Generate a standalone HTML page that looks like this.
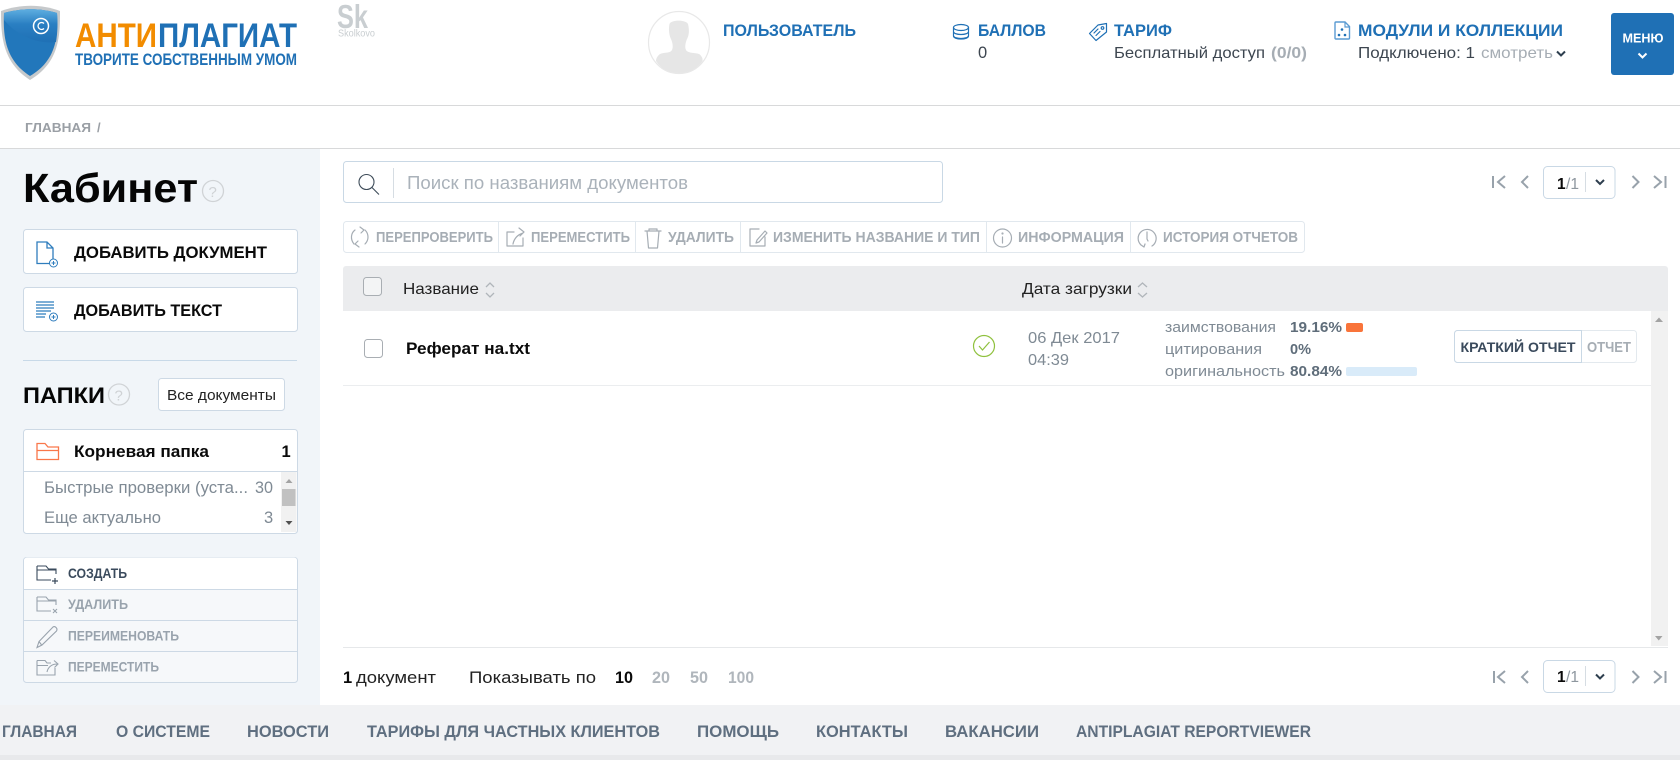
<!DOCTYPE html>
<html lang="ru"><head><meta charset="utf-8"><title>Антиплагиат</title>
<style>
html,body{margin:0;padding:0;background:#fff;width:1680px;height:760px;overflow:hidden}
svg{display:block}
text{font-family:"Liberation Sans",sans-serif;font-size:16px;fill:#333d47}
.b{font-weight:700}
.hd{font-weight:700;font-size:16.5px;fill:#1f70b5}
.bd{font-size:16px;fill:#3d4650}
.tb{font-weight:700;font-size:14.5px;fill:#a6adb4}
.nav{font-weight:700;font-size:16.5px;fill:#5f6f80}
.ac{font-weight:700;font-size:13.5px;fill:#99a3ad}
.gr{font-size:16px;fill:#7f8a94}
.ln{fill:none;stroke-width:1.2;stroke-linecap:round;stroke-linejoin:round}
</style></head><body>
<svg width="1680" height="760" viewBox="0 0 1680 760" xmlns="http://www.w3.org/2000/svg">
<defs>
<linearGradient id="sh" x1="0" y1="0" x2="0" y2="1"><stop offset="0" stop-color="#5eaee0"/><stop offset=".45" stop-color="#2a7fc2"/><stop offset="1" stop-color="#1f70b5"/></linearGradient>
</defs>
<rect width="1680" height="760" fill="#fff"/>

<!-- logo -->
<path d="M1 11C20 4 42 4 60 11C60 35 60 62 30 80C2 62 1 35 1 11Z" fill="#c6c9cb"/>
<path d="M4 13C21 8 41 8 57 13C58 36 57 60 30 76C5 60 3 36 4 13Z" fill="#2277bb"/>
<path d="M4 13C21 8 41 8 57 13C58 22 57.500 33 56 42C34 45 14 32 4 20Z" fill="url(#sh)"/>
<circle cx="41" cy="26" r="7.500" fill="none" stroke="#fff" stroke-width="1.500"/>
<path d="M44 23.500a3.500 3.500 0 1 0 0 5" fill="none" stroke="#fff" stroke-width="1.300"/>
<text x="75" y="47" class="b" style="font-size:34px;fill:#f28c00" textLength="82" lengthAdjust="spacingAndGlyphs">АНТИ</text>
<text x="158" y="47" class="b" style="font-size:34px;fill:#1f70b5" textLength="139" lengthAdjust="spacingAndGlyphs">ПЛАГИАТ</text>
<text x="75" y="65" class="b" style="font-size:16.500px;fill:#1f70b5" textLength="222" lengthAdjust="spacingAndGlyphs">ТВОРИТЕ СОБСТВЕННЫМ УМОМ</text>
<text x="337" y="28" class="b" style="font-size:33px;fill:#c9ced1" textLength="31" lengthAdjust="spacingAndGlyphs">Sk</text>
<text x="338" y="36.500" style="font-size:10px;fill:#c9ced1" textLength="37" lengthAdjust="spacingAndGlyphs">Skolkovo</text>

<!-- user -->
<ellipse cx="679" cy="42.500" rx="30.500" ry="31" fill="#fff" stroke="#e8e8e8" stroke-width="1.200"/>
<path d="M669.500 24C671 19.500 686 19.500 688 24C689.500 30 689 35 687.500 38C685.500 42 684.500 47 686 50C688 53.500 695 52.500 699 54C702 56 703 59 702.500 61C697 69 689 73 679 73C669 73 661 69 656 61C656 58 658 55.500 660 54C665 52 670 53.500 672 50C673.500 47 672.500 42 670.500 38C669 34 668.500 29 669.500 24Z" fill="#e6e6e6"/>
<text x="723" y="36" class="hd" textLength="133" lengthAdjust="spacingAndGlyphs">ПОЛЬЗОВАТЕЛЬ</text>

<!-- points -->
<g class="ln" stroke="#1f70b5"><ellipse cx="961" cy="27.500" rx="7.500" ry="3"/><path d="M953.500 27.500V36c0 4 15 4 15 0V27.500M953.500 31.500c0 4 15 4 15 0M953.500 35.500c0 4 15 4 15 0"/></g>
<text x="978" y="36" class="hd" textLength="68" lengthAdjust="spacingAndGlyphs">БАЛЛОВ</text>
<text x="978" y="58" class="bd" style="font-size:16.500px">0</text>

<!-- tariff -->
<g class="ln" stroke="#1f70b5"><path d="M1098 25L1106.500 23.500L1106.500 32L1096 40.500L1089.500 33.500Z"/><circle cx="1102.500" cy="28" r="1.300"/><path d="M1094 33l4-4M1096 35.500l4-4"/></g>
<text x="1114" y="36" class="hd" textLength="58" lengthAdjust="spacingAndGlyphs">ТАРИФ</text>
<text x="1114" y="58" class="bd" textLength="151" lengthAdjust="spacingAndGlyphs">Бесплатный доступ</text>
<text x="1271" y="58" class="b" style="fill:#a6adb4" textLength="36" lengthAdjust="spacingAndGlyphs">(0/0)</text>

<!-- modules -->
<path d="M1336 22h9l4.500 4.500V38a1 1 0 0 1-1 1h-12.500a1 1 0 0 1-1-1V23a1 1 0 0 1 1-1Z" fill="none" stroke="#5b9bd2" stroke-width="1.400"/>
<path d="M1345 22v5h4.500" fill="none" stroke="#5b9bd2" stroke-width="1.200"/>
<circle cx="1342" cy="29.500" r="1.300" fill="#1f70b5"/><circle cx="1339" cy="35" r="1.300" fill="#1f70b5"/><circle cx="1345" cy="35" r="1.300" fill="#1f70b5"/>
<text x="1358" y="36" class="hd" textLength="205" lengthAdjust="spacingAndGlyphs">МОДУЛИ И КОЛЛЕКЦИИ</text>
<text x="1358" y="58" class="bd" textLength="117" lengthAdjust="spacingAndGlyphs">Подключено: 1</text>
<text x="1481" y="58" style="font-size:16px;fill:#a6adb4" textLength="72" lengthAdjust="spacingAndGlyphs">смотреть</text>
<path d="M1557 51.500l4 4 4-4" fill="none" stroke="#2e3f4f" stroke-width="2"/>

<!-- menu -->
<rect x="1611" y="13" width="63" height="62" rx="3" fill="#1f70b5"/>
<text x="1622.500" y="42.500" class="b" style="font-size:13px;fill:#fff" textLength="41" lengthAdjust="spacingAndGlyphs">МЕНЮ</text>
<path d="M1638.500 53.500l4 4 4-4" fill="none" stroke="#fff" stroke-width="2"/>

<!-- breadcrumbs -->
<rect y="105" width="1680" height="1" fill="#d8d9da"/>
<text x="25" y="132" class="b" style="font-size:12.500px;fill:#9a9fa5" textLength="66" lengthAdjust="spacingAndGlyphs">ГЛАВНАЯ</text>
<text x="97" y="132" class="b" style="font-size:13px;fill:#9a9fa5">/</text>
<rect y="148" width="1680" height="1" fill="#d8d9da"/>

<!-- sidebar -->
<rect y="149" width="320" height="556" fill="#f1f5f9"/>
<text x="23" y="202" class="b" style="font-size:41px;fill:#050505" textLength="175" lengthAdjust="spacingAndGlyphs">Кабинет</text>
<circle cx="213" cy="191" r="10.500" fill="none" stroke="#d0d3d6" stroke-width="1.300"/>
<text x="208.500" y="197" style="font-size:15px;fill:#cfd2d5">?</text>

<rect x="23.500" y="229.500" width="274" height="44" rx="3" fill="#fff" stroke="#cdd9e5"/>
<path d="M37 242h10l6 6v15.500H37Z M47 242v6h6" fill="none" stroke="#2f7dbd" stroke-width="1.300"/>
<circle cx="53.500" cy="263" r="4" fill="#fff" stroke="#2f7dbd"/><path d="M51.500 263h4M53.500 261v4" stroke="#2f7dbd"/>
<text x="74" y="258" class="b" style="font-size:16.500px;fill:#0a0a0a" textLength="193" lengthAdjust="spacingAndGlyphs">ДОБАВИТЬ ДОКУМЕНТ</text>

<rect x="23.500" y="287.500" width="274" height="44" rx="3" fill="#fff" stroke="#cdd9e5"/>
<path d="M36 302h18M36 305h18M36 308h18M36 311h15M36 314h10M36 317h9" stroke="#2f7dbd" stroke-width="1.300"/>
<circle cx="53.500" cy="317" r="4" fill="#fff" stroke="#2f7dbd"/><path d="M51.500 317h4M53.500 315v4" stroke="#2f7dbd"/>
<text x="74" y="316" class="b" style="font-size:16.500px;fill:#0a0a0a" textLength="148" lengthAdjust="spacingAndGlyphs">ДОБАВИТЬ ТЕКСТ</text>

<rect x="23" y="360" width="274" height="1" fill="#c8d9e8"/>

<text x="23" y="403" class="b" style="font-size:22px;fill:#050505" textLength="82" lengthAdjust="spacingAndGlyphs">ПАПКИ</text>
<circle cx="119" cy="394.500" r="10.500" fill="none" stroke="#d0d3d6" stroke-width="1.300"/>
<text x="114.500" y="400.500" style="font-size:15px;fill:#cfd2d5">?</text>
<rect x="158.500" y="378.500" width="126" height="32" rx="3" fill="#fff" stroke="#cdd9e5"/>
<text x="167" y="400" style="font-size:15px;fill:#222" textLength="109" lengthAdjust="spacingAndGlyphs">Все документы</text>

<rect x="23.500" y="429.500" width="274" height="104" rx="3" fill="#fff" stroke="#cdd9e5"/>
<rect x="24" y="471" width="273" height="1" fill="#cdd9e5"/>
<path d="M37 443.500h8l3 3.500h10.500v12.500H37Z M37 450.500h21.500" fill="none" stroke="#f9774a" stroke-width="1.300"/>
<text x="74" y="457" class="b" style="font-size:16.500px;fill:#0a0a0a" textLength="135" lengthAdjust="spacingAndGlyphs">Корневая папка</text>
<text x="281.500" y="457" class="b" style="font-size:16.500px;fill:#0a0a0a">1</text>
<text x="44" y="493" class="gr" style="font-size:16.500px" textLength="204" lengthAdjust="spacingAndGlyphs">Быстрые проверки (уста...</text>
<text x="255" y="493" class="gr" style="font-size:16.500px" textLength="18" lengthAdjust="spacingAndGlyphs">30</text>
<text x="44" y="523" class="gr" style="font-size:16.500px" textLength="117" lengthAdjust="spacingAndGlyphs">Еще актуально</text>
<text x="264" y="523" class="gr" style="font-size:16.500px">3</text>
<rect x="281" y="472" width="15.500" height="60" fill="#f1f1f1"/>
<rect x="282" y="489" width="13.500" height="17" fill="#c1c1c1"/>
<path d="M285.500 483l3.500-4 3.500 4Z" fill="#a3a3a3"/><path d="M285.500 521h7l-3.500 4Z" fill="#505050"/>

<!-- folder actions -->
<rect x="23.500" y="557.500" width="274" height="125" rx="3" fill="#f6f8fa" stroke="#cdd9e5"/>
<path d="M24 560.500a3 3 0 0 1 3-3h267a3 3 0 0 1 3 3V589H24Z" fill="#fff"/>
<rect x="24" y="589" width="273" height="1" fill="#cdd9e5"/><rect x="24" y="620" width="273" height="1" fill="#cdd9e5"/><rect x="24" y="651" width="273" height="1" fill="#cdd9e5"/>
<path d="M37 566h9l2.500 3h7.500v5M37 566v14h14M37 570h19" fill="none" stroke="#3a4a5c" stroke-width="1.100"/>
<path d="M52 581h6M55 578v6" stroke="#3a4a5c" stroke-width="1.200"/>
<text x="68" y="578" class="b" style="font-size:13.500px;fill:#3a4a5c" textLength="59" lengthAdjust="spacingAndGlyphs">СОЗДАТЬ</text>
<path d="M37 597h9l2.500 3h7.500v5M37 597v14h14M37 601h19" fill="none" stroke="#99a3ad" stroke-width="1.100"/>
<path d="M53 609l4 4M57 609l-4 4" stroke="#99a3ad" stroke-width="1.100"/>
<text x="68" y="609" class="ac" textLength="60" lengthAdjust="spacingAndGlyphs">УДАЛИТЬ</text>
<path d="M37 647.500l2-6 14-14.500c2-1.500 5 1.500 3.500 4l-14.500 14Z M39 641.500l3 4" fill="none" stroke="#99a3ad" stroke-width="1.100"/>
<text x="68" y="640.500" class="ac" textLength="111" lengthAdjust="spacingAndGlyphs">ПЕРЕИМЕНОВАТЬ</text>
<path d="M37 660.500h8l2 2.500h4M37 660.500v14.500h18v-7M37 665.500h11" fill="none" stroke="#99a3ad" stroke-width="1.100"/>
<path d="M47 672c1-5 5-8 10-8M54 660.500l4 3.500-3.500 3.500" fill="none" stroke="#99a3ad" stroke-width="1.100"/>
<text x="68" y="671.500" class="ac" textLength="91" lengthAdjust="spacingAndGlyphs">ПЕРЕМЕСТИТЬ</text>

<!-- search -->
<rect x="343.500" y="161.500" width="599" height="41" rx="3" fill="#fff" stroke="#c9d8e5"/>
<circle cx="366.500" cy="182" r="7.500" fill="none" stroke="#3e4c59" stroke-width="1.100"/>
<path d="M372 187.500l7 7" stroke="#3e4c59" stroke-width="1.100"/>
<rect x="393" y="168" width="1" height="30" fill="#d6dde3"/>
<text x="407" y="189" style="font-size:18px;fill:#aab2ba" textLength="281" lengthAdjust="spacingAndGlyphs">Поиск по названиям документов</text>

<!-- pager top -->
<g fill="none" stroke="#98a2ab" stroke-width="2">
<path d="M1493 176v12M1505 176l-7 6 7 6M1528 176l-6 6 6 6M1632.500 176l6 6-6 6M1654 176l7 6-7 6M1665.500 176v12"/>
</g>
<rect x="1543.500" y="166.500" width="71.500" height="32" rx="4" fill="#fff" stroke="#c9d8e5"/>
<text x="1557" y="189" class="b" style="font-size:15.500px;fill:#0a0a0a">1</text><text x="1566" y="189" style="font-size:15.500px;fill:#8e979f" textLength="13" lengthAdjust="spacingAndGlyphs">/1</text>
<rect x="1585" y="172" width="1" height="20" fill="#d6dde3"/>
<path d="M1596 180l4 4 4-4" fill="none" stroke="#2e3f4f" stroke-width="2"/>

<!-- toolbar -->
<rect x="343.500" y="221.500" width="961" height="31" rx="3" fill="#fff" stroke="#e1e8ee"/>
<g fill="#e1e8ee"><rect x="498" y="222" width="1" height="30"/><rect x="635" y="222" width="1" height="30"/><rect x="740" y="222" width="1" height="30"/><rect x="986" y="222" width="1" height="30"/><rect x="1130" y="222" width="1" height="30"/></g>
<g class="ln" stroke="#a6adb4">
<path d="M355 230c-4 3-5 9-1 14M365 230c4 4 4 10 0 14M360 227l4 3-3 3M359 247l-4-3 3-3"/>
<path d="M507 232h7M507 232v14h16v-8M513 244c1-5 4-9 10-11M519 228l5 4-4 4"/>
<path d="M645 231h16M649 231v-2h8v2M647 231l1.500 17h9l1.500-17"/>
<path d="M750 229h9M750 229v17h15v-9M757 240l-1 3 3-1 8-9-2-2Z"/>
<circle cx="1002.500" cy="238" r="9"/><path d="M1002.500 237v6"/><circle cx="1002.500" cy="233.500" r=".5"/>
<path d="M1141 245a9 9 0 1 1 11 1M1147 232v7l1 2M1145 244l-1 3-3-2"/>
</g>
<g>
<text x="376" y="242" class="tb" textLength="117" lengthAdjust="spacingAndGlyphs">ПЕРЕПРОВЕРИТЬ</text>
<text x="531" y="242" class="tb" textLength="99" lengthAdjust="spacingAndGlyphs">ПЕРЕМЕСТИТЬ</text>
<text x="668" y="242" class="tb" textLength="66" lengthAdjust="spacingAndGlyphs">УДАЛИТЬ</text>
<text x="773" y="242" class="tb" textLength="207" lengthAdjust="spacingAndGlyphs">ИЗМЕНИТЬ НАЗВАНИЕ И ТИП</text>
<text x="1018" y="242" class="tb" textLength="106" lengthAdjust="spacingAndGlyphs">ИНФОРМАЦИЯ</text>
<text x="1163" y="242" class="tb" textLength="135" lengthAdjust="spacingAndGlyphs">ИСТОРИЯ ОТЧЕТОВ</text>
</g>

<!-- table head -->
<path d="M346 266h1319a3 3 0 0 1 3 3v42H343v-42a3 3 0 0 1 3-3Z" fill="#ebecee"/>
<rect x="363.500" y="277.500" width="18" height="18" rx="3" fill="#f3f4f5" stroke="#a9aeb3"/>
<text x="403" y="294" style="font-size:16px;fill:#222" textLength="76" lengthAdjust="spacingAndGlyphs">Название</text>
<path d="M486 287l4-4 4 4M486 293l4 4 4-4" fill="none" stroke="#b0b5ba" stroke-width="1.300"/>
<text x="1022" y="294" style="font-size:16px;fill:#222" textLength="110" lengthAdjust="spacingAndGlyphs">Дата загрузки</text>
<path d="M1138 287l4.500-4 4.500 4M1138 293l4.500 4 4.500-4" fill="none" stroke="#b0b5ba" stroke-width="1.300"/>

<!-- row -->
<rect x="1651" y="311" width="17" height="335" fill="#f1f1f1"/>
<path d="M1655 322l4-4.500 4 4.500Z" fill="#a3a3a3"/><path d="M1655 636h7.500l-3.750 4.500Z" fill="#a3a3a3"/>
<rect x="343" y="385" width="1308" height="1" fill="#ebedef"/>
<rect x="343" y="647" width="1325" height="1" fill="#e6e8ea"/>
<rect x="364.500" y="339.500" width="18" height="18" rx="3" fill="#fff" stroke="#a9aeb3"/>
<text x="406" y="354" class="b" style="font-size:16.500px;fill:#0a0a0a" textLength="124" lengthAdjust="spacingAndGlyphs">Реферат на.txt</text>
<circle cx="984" cy="346" r="10.500" fill="none" stroke="#8fc13e" stroke-width="1.200"/>
<path d="M979 346l3.500 4 7-8" fill="none" stroke="#8fc13e" stroke-width="1.200"/>
<text x="1028" y="343" class="gr" textLength="92" lengthAdjust="spacingAndGlyphs">06 Дек 2017</text>
<text x="1028" y="365" class="gr" textLength="41" lengthAdjust="spacingAndGlyphs">04:39</text>
<g>
<text x="1165" y="332" class="gr" style="font-size:15px" textLength="111" lengthAdjust="spacingAndGlyphs">заимствования</text>
<text x="1165" y="354" class="gr" style="font-size:15px" textLength="97" lengthAdjust="spacingAndGlyphs">цитирования</text>
<text x="1165" y="376" class="gr" style="font-size:15px" textLength="120" lengthAdjust="spacingAndGlyphs">оригинальность</text>
<text x="1290" y="332" class="b" style="font-size:15px;fill:#5f6d7a" textLength="52" lengthAdjust="spacingAndGlyphs">19.16%</text>
<text x="1290" y="354" class="b" style="font-size:15px;fill:#5f6d7a" textLength="21" lengthAdjust="spacingAndGlyphs">0%</text>
<text x="1290" y="376" class="b" style="font-size:15px;fill:#5f6d7a" textLength="52" lengthAdjust="spacingAndGlyphs">80.84%</text>
</g>
<rect x="1346" y="323" width="17" height="9" rx="2" fill="#f9743a"/>
<rect x="1346" y="367" width="71" height="9" rx="2" fill="#d9ebf9"/>
<rect x="1454.500" y="330.500" width="182" height="32" rx="3" fill="#fff" stroke="#e3e9ee"/>
<path d="M1581.500 330.500H1457.500a3 3 0 0 0-3 3v26a3 3 0 0 0 3 3h124Z" fill="#fff" stroke="#c9d8e5"/>
<text x="1460.500" y="352" class="b" style="font-size:14px;fill:#3a4a5c" textLength="115" lengthAdjust="spacingAndGlyphs">КРАТКИЙ ОТЧЕТ</text>
<text x="1587" y="352" class="b" style="font-size:15px;fill:#a6adb4" textLength="44" lengthAdjust="spacingAndGlyphs">ОТЧЕТ</text>

<!-- bottom -->
<text x="343" y="683" class="b" style="font-size:16.500px;fill:#0a0a0a">1</text>
<text x="356" y="683" style="font-size:16.500px;fill:#222" textLength="80" lengthAdjust="spacingAndGlyphs">документ</text>
<text x="469" y="683" style="font-size:16.500px;fill:#222" textLength="127" lengthAdjust="spacingAndGlyphs">Показывать по</text>
<text x="615" y="683" class="b" style="font-size:16.500px;fill:#0a0a0a" textLength="18" lengthAdjust="spacingAndGlyphs">10</text>
<text x="652" y="683" class="b" style="font-size:16.500px;fill:#b0b6bc" textLength="18" lengthAdjust="spacingAndGlyphs">20</text>
<text x="690" y="683" class="b" style="font-size:16.500px;fill:#b0b6bc" textLength="18" lengthAdjust="spacingAndGlyphs">50</text>
<text x="728" y="683" class="b" style="font-size:16.500px;fill:#b0b6bc" textLength="26" lengthAdjust="spacingAndGlyphs">100</text>

<g fill="none" stroke="#98a2ab" stroke-width="2">
<path d="M1494 671v12M1505 671l-7 6 7 6M1528 671l-6 6 6 6M1632.500 671l6 6-6 6M1654 671l7 6-7 6M1665.500 671v12"/>
</g>
<rect x="1543.500" y="660.500" width="71.500" height="32" rx="4" fill="#fff" stroke="#c9d8e5"/>
<text x="1557" y="682" class="b" style="font-size:15.500px;fill:#0a0a0a">1</text><text x="1566" y="682" style="font-size:15.500px;fill:#8e979f" textLength="13" lengthAdjust="spacingAndGlyphs">/1</text>
<rect x="1585" y="666" width="1" height="20" fill="#d6dde3"/>
<path d="M1596 674.500l4 4 4-4" fill="none" stroke="#2e3f4f" stroke-width="2"/>

<!-- footer -->
<rect y="705" width="1680" height="50" fill="#f1f2f4"/>
<rect y="755" width="1680" height="5" fill="#e8e9eb"/>
<text x="2" y="737" class="nav" textLength="75" lengthAdjust="spacingAndGlyphs">ГЛАВНАЯ</text>
<text x="116" y="737" class="nav" textLength="94" lengthAdjust="spacingAndGlyphs">О СИСТЕМЕ</text>
<text x="247" y="737" class="nav" textLength="82" lengthAdjust="spacingAndGlyphs">НОВОСТИ</text>
<text x="367" y="737" class="nav" textLength="293" lengthAdjust="spacingAndGlyphs">ТАРИФЫ ДЛЯ ЧАСТНЫХ КЛИЕНТОВ</text>
<text x="697" y="737" class="nav" textLength="82" lengthAdjust="spacingAndGlyphs">ПОМОЩЬ</text>
<text x="816" y="737" class="nav" textLength="92" lengthAdjust="spacingAndGlyphs">КОНТАКТЫ</text>
<text x="945" y="737" class="nav" textLength="94" lengthAdjust="spacingAndGlyphs">ВАКАНСИИ</text>
<text x="1076" y="737" class="nav" textLength="235" lengthAdjust="spacingAndGlyphs">ANTIPLAGIAT REPORTVIEWER</text>
</svg>
</body></html>
